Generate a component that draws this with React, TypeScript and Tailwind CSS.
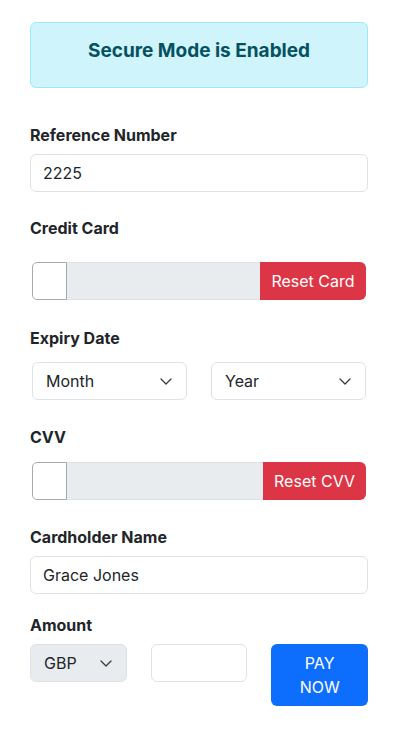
import React from "react";

function Chevron() {
  return (
    <svg width="16" height="12" viewBox="0 0 16 12" className="shrink-0">
      <path d="M3 4l5 5 5-5" fill="none" stroke="#343a40" strokeWidth="1.25" strokeLinecap="round" strokeLinejoin="round" />
    </svg>
  );
}

function Select({ label, disabled }: { label: string; disabled?: boolean }) {
  return (
    <div
      className={`flex h-[38px] items-center justify-between rounded-[6px] border border-[#dee2e6] pl-[13px] pr-[12px] text-[16px] text-[#212529] ${
        disabled ? "bg-[#e9ecef]" : "bg-white"
      }`}
    >
      <span>{label}</span>
      <Chevron />
    </div>
  );
}

function ResetRow({ label, btnWidth }: { label: string; btnWidth: string }) {
  return (
    <div className="mx-[2px] flex h-[38px]">
      <div className="w-[35px] shrink-0 rounded-l-[5px] border border-[#a6a9ad] bg-white" />
      <div className="flex-1 border-y border-[#dee2e6] bg-[#e9ecef]" />
      <div
        className={`${btnWidth} flex shrink-0 items-center justify-center rounded-r-[6px] bg-[#dc3545] text-[16px] text-white`}
      >
        {label}
      </div>
    </div>
  );
}

function Label({ children, className = "" }: { children: React.ReactNode; className?: string }) {
  return <div className={`h-[24px] text-[16px] font-bold leading-[24px] text-[#212529] ${className}`}>{children}</div>;
}

function Input({ value }: { value?: string }) {
  return (
    <div className="flex h-[38px] items-center rounded-[6px] border border-[#dee2e6] bg-white px-[12px] text-[16px] text-[#212529]">
      {value}
    </div>
  );
}

export default function App() {
  return (
    <div
      className="min-h-[742px] bg-white pl-[30px] pr-[33px] pt-[22px]"
      style={{ fontFamily: "Inter, 'Liberation Sans', sans-serif" }}
    >
      <div className="h-[66px] rounded-[6px] border border-[#9eeaf9] bg-[#cff4fc] pt-[16px] text-center text-[19px] font-bold leading-[24px] text-[#055160]">
        Secure Mode is Enabled
      </div>

      <Label className="mt-[35px]">Reference Number</Label>
      <div className="mt-[7px]">
        <Input value="2225" />
      </div>

      <Label className="mt-[24px]">Credit Card</Label>
      <div className="mt-[22px]">
        <ResetRow label="Reset Card" btnWidth="w-[106px]" />
      </div>

      <Label className="mt-[26px]">Expiry Date</Label>
      <div className="mx-[2px] mt-[12px] grid grid-cols-2 gap-6">
        <Select label="Month" />
        <Select label="Year" />
      </div>

      <Label className="mt-[25px]">CVV</Label>
      <div className="mt-[13px]">
        <ResetRow label="Reset CVV" btnWidth="w-[103px]" />
      </div>

      <Label className="mt-[25px]">Cardholder Name</Label>
      <div className="mt-[7px]">
        <Input value="Grace Jones" />
      </div>

      <Label className="mt-[19px]">Amount</Label>
      <div className="mt-[7px] grid grid-cols-3 items-start gap-6">
        <Select label="GBP" disabled />
        <Input />
        <div className="flex h-[62px] items-center justify-center rounded-[6px] bg-[#0d6efd] text-center text-[16px] leading-[24px] text-white">
          PAY
          <br />
          NOW
        </div>
      </div>
    </div>
  );
}
